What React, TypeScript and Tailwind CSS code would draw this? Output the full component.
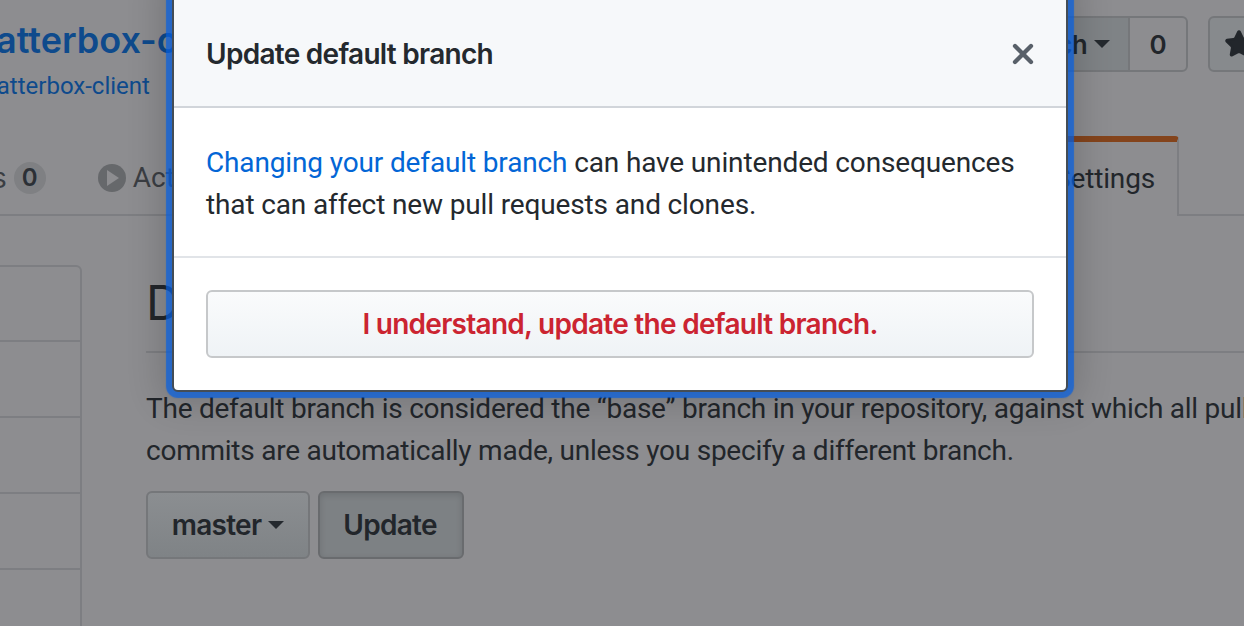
import { Star, X } from "lucide-react"

function Caret() {
  return <span className="inline-block border-x-[8px] border-t-[8px] border-x-transparent border-t-[#24292e] border-b-0" />
}

function Background() {
  return (
    <div className="flex h-[626px] flex-col overflow-hidden bg-[#8d8d90] text-[#22262b]">
      <div className="flex h-[136px] shrink-0 items-start">
        <div className="ml-[-47px] w-[1084px] shrink-0 pt-[20px]">
          <div className="text-[36px] font-semibold leading-[40px] text-[#0e4a8c]">chatterbox-client</div>
          <div className="ml-[18px] mt-[11px] font-['Roboto',sans-serif] text-[24px] leading-[30px] text-[#0e4a8c]">chatterbox-client</div>
        </div>
        <div className="mt-[16px] flex shrink-0 items-stretch">
          <div className="flex h-[56px] w-[91px] items-center justify-end gap-[7px] rounded-l-[6px] border-2 border-r-0 border-[#75777a] bg-[#7f8386] pr-[18px] text-[26px] font-semibold tracking-[-0.6px]">
            ch <Caret />
          </div>
          <div className="flex h-[56px] w-[60px] items-center justify-center rounded-r-[6px] border-2 border-[#75777a] text-[26px] font-semibold">
            0
          </div>
          <div className="ml-[20px] flex h-[56px] w-[80px] items-center rounded-[6px] border-2 border-[#75777a] bg-[#878a8d] pl-[14px]">
            <Star size={30} className="fill-[#22262b] text-[#22262b]" />
          </div>
        </div>
      </div>
      <div className="flex h-[80px] shrink-0 border-b-2 border-[#7d7e82]">
        <div className="ml-[-8px] flex items-center pt-[6px]">
          <span className="text-[28px] text-[#3b3e43]">s</span>
          <span className="ml-[7px] flex h-[32px] w-[32px] items-center justify-center rounded-full bg-[#7f8083] text-[24px] font-semibold text-[#2c3036]">0</span>
          <span className="ml-[52px] flex h-[28px] w-[28px] items-center justify-center rounded-full bg-[#66686b]">
            <span className="ml-[3px] border-y-[8px] border-l-[12px] border-y-transparent border-l-[#8d8d90]" />
          </span>
          <span className="ml-[7px] font-['Roboto',sans-serif] text-[28px] text-[#3b3e43]">Actions</span>
        </div>
        <div className="ml-auto mr-[65px] mb-[-2px] flex w-[130px] items-center rounded-t-[4px] border-x-2 border-t-[6px] border-[#7d7e82] border-t-[#84441c] bg-[#8d8d90] pl-[3px] font-['Roboto',sans-serif] text-[28px] tracking-[-0.15px]">
          Settings
        </div>
      </div>
      <div className="flex flex-1 pt-[49px]">
        <div className="ml-[-40px] flex h-[400px] w-[122px] shrink-0 flex-col rounded-tr-[6px] border-2 border-[#7d7e82]">
          <div className="h-[75px] shrink-0 border-b-2 border-[#7d7e82]" />
          <div className="h-[76px] shrink-0 border-b-2 border-[#7d7e82]" />
          <div className="h-[76px] shrink-0 border-b-2 border-[#7d7e82]" />
          <div className="h-[76px] shrink-0 border-b-2 border-[#7d7e82]" />
        </div>
        <div className="ml-[64px] w-[1200px] shrink-0">
          <div className="h-[88px] border-b-2 border-[#7d7e82] text-[48px] leading-[76px] text-[#22262b]">Default branch</div>
          <p className="mt-[35px] whitespace-nowrap font-['Roboto',sans-serif] text-[28px] leading-[42px] tracking-[-0.24px]">
            The default branch is considered the “base” branch in your repository, against which all pull requests and code
            <br />
            commits are automatically made, unless you specify a different branch.
          </p>
          <div className="mt-[19px] flex gap-[8px]">
            <div className="flex h-[68px] w-[164px] items-center justify-center gap-[7px] rounded-[6px] border-2 border-[#75777a] bg-gradient-to-b from-[#8b8e91] to-[#7f8386] text-[28px] font-semibold tracking-[-0.72px]">
              master <Caret />
            </div>
            <div className="flex h-[68px] w-[146px] items-center justify-center rounded-[6px] border-2 border-[#696b6e] bg-[#7d8184] pr-[2px] text-[28px] font-semibold tracking-[-0.72px] shadow-[inset_0_2px_6px_rgba(0,0,0,0.12)]">
              Update
            </div>
          </div>
        </div>
      </div>
    </div>
  )
}

export default function App() {
  return (
    <div className="relative h-[626px] w-[1244px] overflow-hidden font-['Inter',sans-serif]">
      <Background />
      <div className="absolute left-[172px] top-[-20px] w-[896px] rounded-[6px] border-2 border-[#444d56] bg-white shadow-[0_0_1px_6px_rgba(5,95,226,0.72),0_0_34px_12px_rgba(0,0,0,0.16)]">
        <div className="flex h-[126px] items-center justify-between border-b-2 border-[#d1d5da] bg-[#f6f8fa] pl-[32px] pr-[32px] pt-[20px]">
          <span className="text-[28px] font-semibold tracking-[-0.72px] text-[#24292e]">Update default branch</span>
          <X size={32} strokeWidth={3.2} className="mr-[-5px] text-[#586069]" />
        </div>
        <div className="h-[150px] border-b-2 border-[#e1e4e8] px-[32px] pt-[34px] font-['Roboto',sans-serif] text-[28px] leading-[42px] tracking-[-0.14px] text-[#24292e]">
          <span className="text-[#0366d6]">Changing your default branch</span> can have unintended consequences
          <br />
          that can affect new pull requests and clones.
        </div>
        <div className="px-[32px] py-[32px]">
          <div className="flex h-[68px] items-center justify-center rounded-[6px] border-2 border-[#c6c8ca] bg-gradient-to-b from-[#fafbfc] to-[#eff3f6] text-[28px] font-semibold tracking-[-0.72px] text-[#cb2431]">
            I understand, update the default branch.
          </div>
        </div>
      </div>
    </div>
  )
}
